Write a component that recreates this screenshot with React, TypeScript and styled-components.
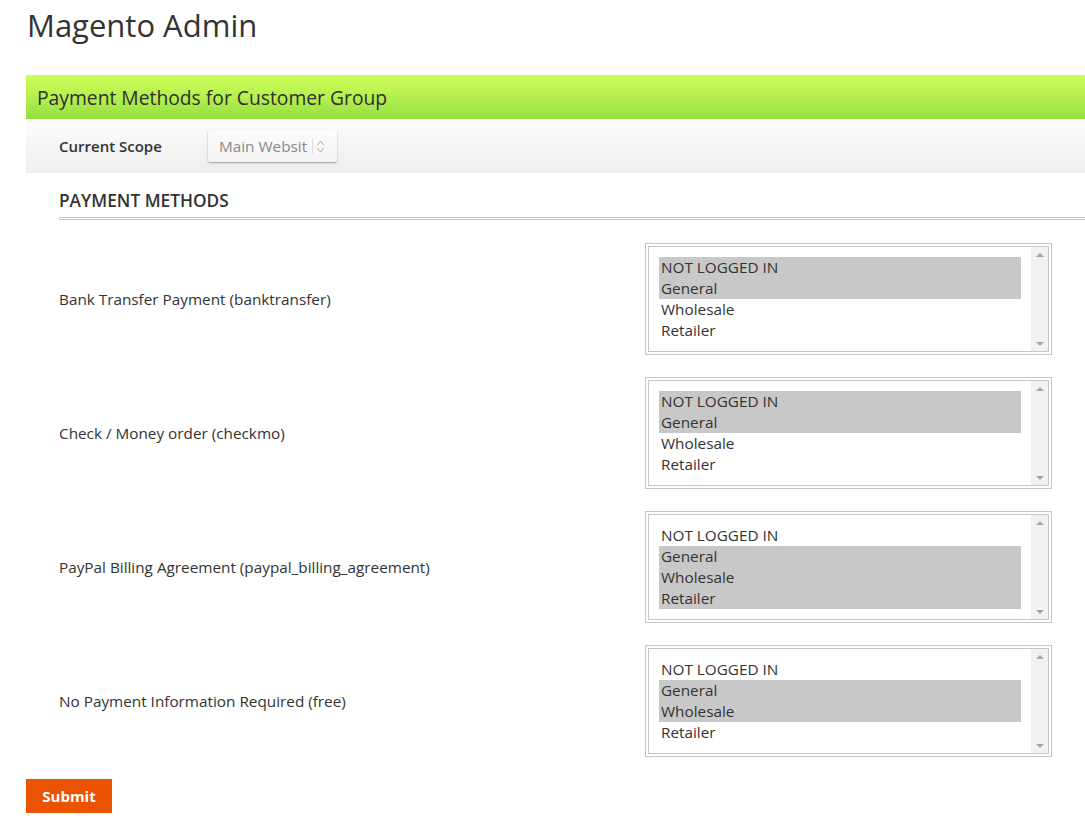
import React from 'react'
import styled, { createGlobalStyle } from 'styled-components'

const GlobalStyle = createGlobalStyle`
body{
    margin: 0;
    background: #fff;
    font-family: "Open Sans", "Noto Sans", sans-serif;
    color: #333;
}
`

const Page = styled.div`
padding-left: 26px;
width: 1059px;
`

const Title = styled.h1`
margin: 4px 0 29px 1px;
font-size: 31px;
font-weight: 400;
line-height: 42px;
color: #333;
`

const GreenBar = styled.div`
height: 44px;
display: flex;
align-items: center;
padding-left: 11px;
font-size: 19.3px;
color: #2f2f2f;
background: linear-gradient(to bottom, #cdfe57 0%, #b5f04e 50%, #94df42 100%);
`

const ScopeBar = styled.div`
height: 54px;
display: flex;
align-items: center;
padding-left: 33px;
background: linear-gradient(to bottom, #fcfcfc, #eeeeee);
`

const ScopeLabel = styled.span`
font-size: 15px;
font-weight: 600;
width: 149px;
color: #333;
`

const ScopeSelect = styled.div`
width: 129px;
height: 32px;
box-sizing: border-box;
display: flex;
align-items: center;
padding-left: 11px;
border-radius: 3px;
background: linear-gradient(to bottom, #fcfcfc, #f4f4f4);
box-shadow: 0 1px 2px rgba(0,0,0,0.35);
font-size: 15.3px;
color: #888;
`

const Divider = styled.span`
width: 1px;
height: 16px;
background: #ddd;
margin: 0 3px 0 5px;
`

const Fieldset = styled.div`
margin-left: 33px;
`

const Legend = styled.div`
font-size: 17.3px;
font-weight: 600;
color: #333;
padding-top: 16px;
height: 28px;
border-bottom: 3px double #c4c4c4;
margin-bottom: 23px;
`

const Row = styled.div`
display: flex;
align-items: center;
margin-bottom: 22px;
`

const Label = styled.div`
width: 586px;
font-size: 15.3px;
color: #333;
`

const Outer = styled.div`
width: 407px;
height: 112px;
box-sizing: border-box;
border: 1px solid #c6c6c6;
padding: 2px;
`

const Inner = styled.div`
height: 100%;
box-sizing: border-box;
border: 1px solid #c6c6c6;
display: flex;
`

const Options = styled.div`
flex: 1;
padding: 10px 10px 0 10px;
`

const Option = styled.div<{ $selected: boolean }>`
height: 21px;
line-height: 21px;
padding-left: 2px;
font-size: 15.3px;
color: #333;
background: ${p => (p.$selected ? '#c8c8c8' : 'transparent')};
`

const Scroll = styled.div`
width: 17px;
background: #f1f1f1;
display: flex;
flex-direction: column;
justify-content: space-between;
align-items: center;
padding: 6px 0 5px;
`

const Arrow = styled.span<{ $up: boolean }>`
width: 0;
height: 0;
border-left: 4px solid transparent;
border-right: 4px solid transparent;
${p => (p.$up ? 'border-bottom: 4px solid #a3a3a3;' : 'border-top: 4px solid #a3a3a3;')}
`

const Submit = styled.button`
width: 86px;
height: 34px;
border: none;
background: #eb5202;
color: #fff;
font-family: "Open Sans", sans-serif;
font-size: 15px;
font-weight: 700;
padding: 0;
cursor: pointer;
`

const groups = ['NOT LOGGED IN', 'General', 'Wholesale', 'Retailer']

const methods = [
    { label: 'Bank Transfer Payment (banktransfer)', selected: [0, 1] },
    { label: 'Check / Money order (checkmo)', selected: [0, 1] },
    { label: 'PayPal Billing Agreement (paypal_billing_agreement)', selected: [1, 2, 3] },
    { label: 'No Payment Information Required (free)', selected: [1, 2] },
]

const Chevrons = () => (
    <svg width="9" height="15" viewBox="0 0 9 15" fill="none" stroke="#aaa" strokeWidth="1">
        <path d="M1.5 6 L4.5 2 L7.5 6" />
        <path d="M1.5 9 L4.5 13 L7.5 9" />
    </svg>
)

const App = () => {
    return (
        <Page>
            <GlobalStyle />
            <Title>Magento Admin</Title>
            <GreenBar>Payment Methods for Customer Group</GreenBar>
            <ScopeBar>
                <ScopeLabel>Current Scope</ScopeLabel>
                <ScopeSelect>
                    Main Websit
                    <Divider />
                    <Chevrons />
                </ScopeSelect>
            </ScopeBar>
            <Fieldset>
                <Legend>PAYMENT METHODS</Legend>
                {methods.map(m => (
                    <Row key={m.label}>
                        <Label>{m.label}</Label>
                        <Outer>
                            <Inner>
                                <Options>
                                    {groups.map((g, i) => (
                                        <Option key={g} $selected={m.selected.includes(i)}>{g}</Option>
                                    ))}
                                </Options>
                                <Scroll>
                                    <Arrow $up={true} />
                                    <Arrow $up={false} />
                                </Scroll>
                            </Inner>
                        </Outer>
                    </Row>
                ))}
            </Fieldset>
            <Submit>Submit</Submit>
        </Page>
    )
}

export default App
